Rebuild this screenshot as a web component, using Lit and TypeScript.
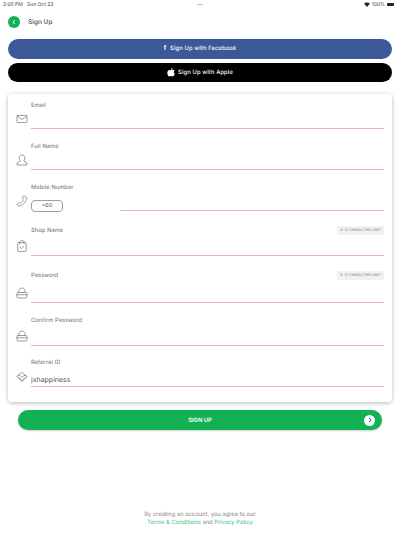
import { LitElement, css, html, svg } from 'lit';
import { customElement } from 'lit/decorators.js';

const icons = {
  mail: svg`<rect x="1" y="2.5" width="10" height="7" rx="1"/><path d="M1.3 3.2 6 6.600l4.700-3.400"/>`,
  user: svg`<path d="M4 6.200C3.300 5.400 3.200 4.600 3.200 3.600 3.200 2 4.400 1 6 1s2.800 1 2.800 2.600c0 1-.1 1.800-.8 2.600v1L10.800 8.800V11H1.200V8.800L4 7.200Z"/>`,
  phone: svg`<path d="M8 1 10.800 2.800C10.400 6.500 7 10.600 3.200 11 1.800 11 1 10.200 1 9.200L3.200 7.600 4.400 8.400C5.800 7.600 6.900 6.200 7.400 4.800L6.600 3.600Z"/>`,
  bag: svg`<rect x="1.800" y="2.500" width="8.400" height="9" rx="1.200"/><path d="M4 4V1.800C4 .9 4.800.6 6 .6s2 .3 2 1.200V4"/><path d="m4.200 7.200 1.300 1.300 2.300-2.400"/>`,
  lock: svg`<rect x="1" y="5.500" width="10" height="5.500" rx="1.200"/><path d="M3 5.500V3.600C3 2 4.300 1 6 1s3 1 3 2.600v1.900M1 7.800h10"/>`,
  gem: svg`<path d="M6 1.500 9 4 6 6.500 3 4Z"/><path d="M1 5.500 6 9.500l5-4M1 5.500 3 4M11 5.500 9 4M3 7.500 6 10.500l3-3"/>`,
};

type Field = {
  label: string;
  icon: keyof typeof icons;
  height: number;
  control: number;
  limit?: boolean;
  value?: string;
  phone?: boolean;
};

const fields: Field[] = [
  { label: 'Email', icon: 'mail', height: 35, control: 18 },
  { label: 'Full Name', icon: 'user', height: 41, control: 18 },
  { label: 'Mobile Number', icon: 'phone', height: 41, control: 18, phone: true },
  { label: 'Shop Name', icon: 'bag', height: 45, control: 20, limit: true },
  { label: 'Password', icon: 'lock', height: 47, control: 22, limit: true },
  { label: 'Confirm Password', icon: 'lock', height: 43, control: 20 },
  { label: 'Referral ID', icon: 'gem', height: 41, control: 19, value: 'jxhappiness' },
];

@customElement('app-root')
export class AppRoot extends LitElement {
  static styles = css`
    :host {
      display: block;
      height: 534px;
      overflow: hidden;
      background: #fff;
      font-family: Inter, 'Liberation Sans', sans-serif;
      text-rendering: geometricPrecision;
      color: #4a4f57;
    }

    .status {
      display: grid;
      grid-template-columns: 1fr auto 1fr;
      align-items: center;
      height: 9px;
      padding: 0 3px;
      font-size: 5px;
      color: #444;
    }
    .status .dots {
      display: flex;
      gap: 1px;
    }
    .status .dots i {
      width: 1.500px;
      height: 1.500px;
      border-radius: 50%;
      background: #888;
    }
    .status .right {
      display: flex;
      justify-content: flex-end;
      align-items: center;
      gap: 2px;
      padding-right: 3px;
    }
    .battery {
      width: 7px;
      height: 3px;
      background: #222;
      border-radius: 1px;
    }

    .header {
      display: flex;
      align-items: center;
      gap: 8px;
      height: 12px;
      margin: 7px 0 0 8px;
      font-size: 6.500px;
      font-weight: 600;
      color: #5f646b;
    }
    .back {
      display: flex;
      align-items: center;
      justify-content: center;
      width: 12px;
      height: 12px;
      border-radius: 50%;
      background: #12b153;
    }

    .social {
      display: flex;
      flex-direction: column;
      gap: 4px;
      margin: 11px 8px 0;
    }
    .social div {
      display: flex;
      align-items: center;
      justify-content: center;
      gap: 3px;
      height: 19.500px;
      border-radius: 10px;
      color: #fff;
      font-size: 5.800px;
      font-weight: 500;
      letter-spacing: 0.120px;
    }
    .fb {
      background: #3b5998;
    }
    .apple {
      background: #000;
    }
    .fb b {
      font-family: 'Liberation Sans', sans-serif;
      font-size: 7px;
      margin-right: 1px;
    }

    .card {
      margin: 12px 8px 0;
      padding: 0 8px;
      height: 308px;
      box-sizing: border-box;
      background: #fff;
      border-radius: 4px;
      box-shadow: 0 1px 4px rgba(0, 0, 0, 0.28);
    }
    .field {
      display: grid;
      grid-template-columns: 15px 1fr;
    }
    .field svg {
      align-self: end;
      margin: 0 0 4px 0;
      width: 12px;
      height: 12px;
      fill: none;
      stroke: #6d757e;
      stroke-width: 0.700;
      stroke-linejoin: round;
      stroke-linecap: round;
    }
    .main {
      display: flex;
      flex-direction: column;
      justify-content: flex-end;
      border-bottom: 1px solid #e6b8b0;
    }
    .main.plain {
      border-bottom: 0;
    }
    .head {
      display: flex;
      align-items: center;
      justify-content: space-between;
      height: 10px;
      font-size: 5.700px;
      color: #666b72;
      letter-spacing: 0.100px;
    }
    .limit {
      display: flex;
      align-items: center;
      height: 9px;
      padding: 0 3px;
      border-radius: 1px;
      background: #f1f1f1;
      color: #777;
      font-size: 3.400px;
      letter-spacing: 0.100px;
    }
    .value {
      display: flex;
      align-items: center;
      padding-top: 6px;
      box-sizing: border-box;
      font-size: 7px;
      color: #555;
    }
    .phone-row {
      display: flex;
      align-items: flex-start;
      gap: 57px;
      height: 19px;
    }
    .code {
      flex: none;
      display: flex;
      align-items: center;
      justify-content: center;
      width: 30px;
      height: 10px;
      margin-top: 8px;
      border: 1px solid #9a9fa6;
      border-radius: 4px;
      font-size: 5.500px;
      color: #555;
    }
    .phone-line {
      flex: 1;
      height: 18px;
      border-bottom: 1px solid #e6b8b0;
    }

    .submit {
      position: relative;
      display: flex;
      align-items: center;
      justify-content: center;
      height: 20px;
      margin: 8px 18px 0;
      border-radius: 10px;
      background: #12b153;
      box-shadow: 0 1px 2px rgba(0, 0, 0, 0.2);
      color: #fff;
      font-size: 5.800px;
      font-weight: 600;
    }
    .arrow {
      position: absolute;
      right: 7px;
      top: 4.500px;
      display: flex;
      align-items: center;
      justify-content: center;
      width: 11px;
      height: 11px;
      border-radius: 50%;
      background: #fff;
    }

    .legal {
      margin-top: 81px;
      text-align: center;
      font-size: 5.800px;
      line-height: 7.500px;
      color: #888;
    }
    .legal span {
      color: #3fc077;
    }
  `;

  renderField(f: Field) {
    return html`
      <div class="field" style="height:${f.height}px">
        <svg viewBox="0 0 12 12">${icons[f.icon]}</svg>
        <div class="main ${f.phone ? 'plain' : ''}">
          <div class="head">
            <span>${f.label}</span>
            ${f.limit ? html`<span class="limit">8-12 CHARACTER LIMIT</span>` : ''}
          </div>
          ${f.phone
            ? html`<div class="phone-row">
                <div class="code">+60</div>
                <div class="phone-line"></div>
              </div>`
            : html`<div class="value" style="height:${f.control}px">${f.value ?? ''}</div>`}
        </div>
      </div>
    `;
  }

  render() {
    return html`
      <div class="status">
        <span>2:05 PM &nbsp; Sun Oct 23</span>
        <span class="dots"><i></i><i></i><i></i></span>
        <span class="right">
          <svg width="6" height="5" viewBox="0 0 6 5"><path d="M0 1.500C1.700 0 4.300 0 6 1.500L3 5Z" fill="#222" /></svg>
          100%
          <span class="battery"></span>
        </span>
      </div>
      <div class="header">
        <span class="back">
          <svg width="6" height="6" viewBox="0 0 6 6"><path d="M3.800 1 1.900 3l1.900 2" fill="none" stroke="#fff" stroke-width="1" /></svg>
        </span>
        Sign Up
      </div>
      <div class="social">
        <div class="fb"><b>f</b>Sign Up with Facebook</div>
        <div class="apple">
          <svg width="8" height="9" viewBox="0 0 8 9">
            <path fill="#fff" d="M4 2.200C4.600 2.200 5.200 1.800 6 1.800 6.800 1.800 7.300 2.200 7.600 2.700 6.300 3.500 6.500 5.300 7.800 5.800 7.400 7 6.500 8.500 5.700 8.500 5 8.500 4.800 8.100 4 8.100S3 8.500 2.300 8.500C1.300 8.500.3 6.400.3 4.900.3 3 1.500 1.900 2.600 1.900 3.100 1.900 3.600 2.200 4 2.200ZM4 1.900C3.900 1 4.700.1 5.600 0 5.700 1 4.900 1.900 4 1.900Z" />
          </svg>
          Sign Up with Apple
        </div>
      </div>
      <div class="card">${fields.map((f) => this.renderField(f))}</div>
      <div class="submit">
        SIGN UP
        <span class="arrow">
          <svg width="6" height="6" viewBox="0 0 6 6"><path d="M2.200 1 4.100 3 2.200 5" fill="none" stroke="#3949ab" stroke-width="1" /></svg>
        </span>
      </div>
      <div class="legal">
        By creating an account, you agree to our<br />
        <span>Terms &amp; Conditions</span> and <span>Privacy Policy</span>
      </div>
    `;
  }
}
